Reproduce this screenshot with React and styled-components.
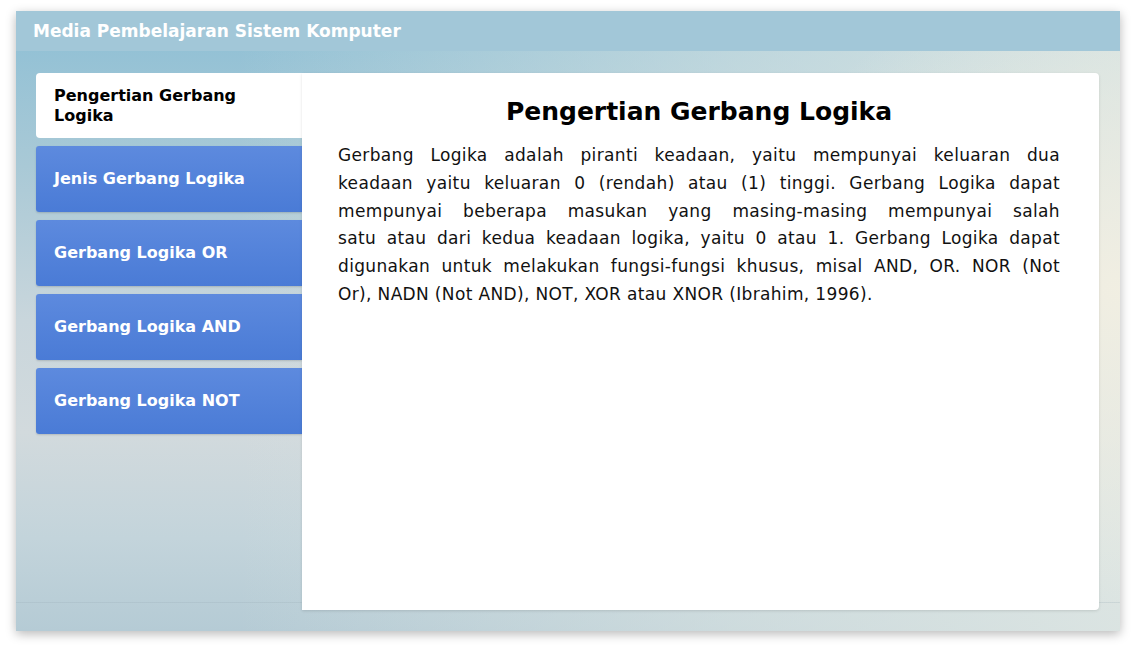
import React, { useState } from 'react';
import styled, { createGlobalStyle } from 'styled-components';

const GlobalStyle = createGlobalStyle`
  html, body {
    margin: 0;
    padding: 0;
    background: #ffffff;
  }
  body {
    font-family: 'DejaVu Sans', 'Open Sans', sans-serif;
  }
`;

const Page = styled.div`
  padding: 11px 16px 22px 16px;
`;

const Card = styled.div`
  width: 1104px;
  height: 620px;
  display: flex;
  flex-direction: column;
  box-shadow: 0 3px 10px rgba(0, 0, 0, 0.28);
  background:
    linear-gradient(to bottom, transparent 591px, rgba(150, 170, 180, 0.25) 591px, rgba(150, 170, 180, 0.25) 592px, transparent 592px),
    radial-gradient(ellipse 380px 320px at 100% 45%, rgba(242, 239, 226, 0.95), rgba(242, 239, 226, 0) 100%),
    linear-gradient(to right, rgba(225, 232, 228, 0) 20%, rgba(225, 232, 228, 0.55) 65%, rgba(225, 232, 228, 0.85) 100%),
    linear-gradient(to bottom, #8dbfd5 0%, #a9c9d6 25%, #c9d6dc 50%, #d2dadd 68%, #c3d4db 85%, #b5cbd5 100%);
`;

const Header = styled.header`
  height: 40px;
  flex: none;
  display: flex;
  align-items: center;
  padding-left: 17px;
  background: #a2c7d8;
  color: #ffffff;
  font-weight: 700;
  font-size: 17px;
`;

const Main = styled.div`
  display: flex;
  padding: 22px 21px 0 20px;
  height: 537px;
`;

const TabList = styled.nav`
  width: 266px;
  flex: none;
  display: flex;
  flex-direction: column;
  gap: 8px;
`;

const Tab = styled.button`
  height: ${(p) => (p.$active ? '65px' : '66px')};
  display: flex;
  align-items: center;
  padding: 0 40px 0 18px;
  border: none;
  border-radius: ${(p) => (p.$active ? '4px 0 0 4px' : '3px 0 0 3px')};
  text-align: left;
  font-family: inherit;
  font-weight: 700;
  font-size: 16px;
  line-height: 20px;
  cursor: pointer;
  color: ${(p) => (p.$active ? '#000000' : '#ffffff')};
  background: ${(p) =>
    p.$active ? '#ffffff' : 'linear-gradient(to bottom, #5d8ade, #4a7bd6)'};
  box-shadow: ${(p) => (p.$active ? 'none' : '0 1px 2px rgba(0, 0, 0, 0.15)')};
`;

const Panel = styled.section`
  flex: 1;
  background: #ffffff;
  border-radius: 0 4px 4px 0;
  padding: 22px 39px 0 36px;
  box-shadow: 0 1px 3px rgba(0, 0, 0, 0.12);
`;

const Title = styled.h1`
  margin: 0 0 13px 0;
  text-align: center;
  font-size: 25px;
  line-height: 34px;
  font-weight: 700;
  color: #000000;
`;

const Text = styled.p`
  margin: 0;
  font-size: 17px;
  letter-spacing: 0.35px;
  line-height: 27.8px;
  color: #111111;
`;

// the lines follow the breaks of the original paragraph
const Line = styled.span`
  display: block;
  text-align: justify;
  text-align-last: ${(p) => (p.$last ? 'left' : 'justify')};
`;

const tabs = [
  'Pengertian Gerbang Logika',
  'Jenis Gerbang Logika',
  'Gerbang Logika OR',
  'Gerbang Logika AND',
  'Gerbang Logika NOT',
];

const lines = [
  'Gerbang Logika adalah piranti keadaan, yaitu mempunyai keluaran dua',
  'keadaan yaitu keluaran 0 (rendah) atau (1) tinggi. Gerbang Logika dapat',
  'mempunyai beberapa masukan yang masing-masing mempunyai salah',
  'satu atau dari kedua keadaan logika, yaitu 0 atau 1. Gerbang Logika dapat',
  'digunakan untuk melakukan fungsi-fungsi khusus, misal AND, OR. NOR (Not',
  'Or), NADN (Not AND), NOT, XOR atau XNOR (Ibrahim, 1996).',
];

export default function App() {
  const [active, setActive] = useState(0);

  return (
    <>
      <GlobalStyle />
      <Page>
        <Card>
          <Header>Media Pembelajaran Sistem Komputer</Header>
          <Main>
            <TabList>
              {tabs.map((t, i) => (
                <Tab key={t} $active={i === active} onClick={() => setActive(i)}>
                  {t}
                </Tab>
              ))}
            </TabList>
            <Panel>
              <Title>Pengertian Gerbang Logika</Title>
              <Text>
                {lines.map((l, i) => (
                  <Line key={i} $last={i === lines.length - 1}>
                    {l}
                  </Line>
                ))}
              </Text>
            </Panel>
          </Main>
        </Card>
      </Page>
    </>
  );
}
